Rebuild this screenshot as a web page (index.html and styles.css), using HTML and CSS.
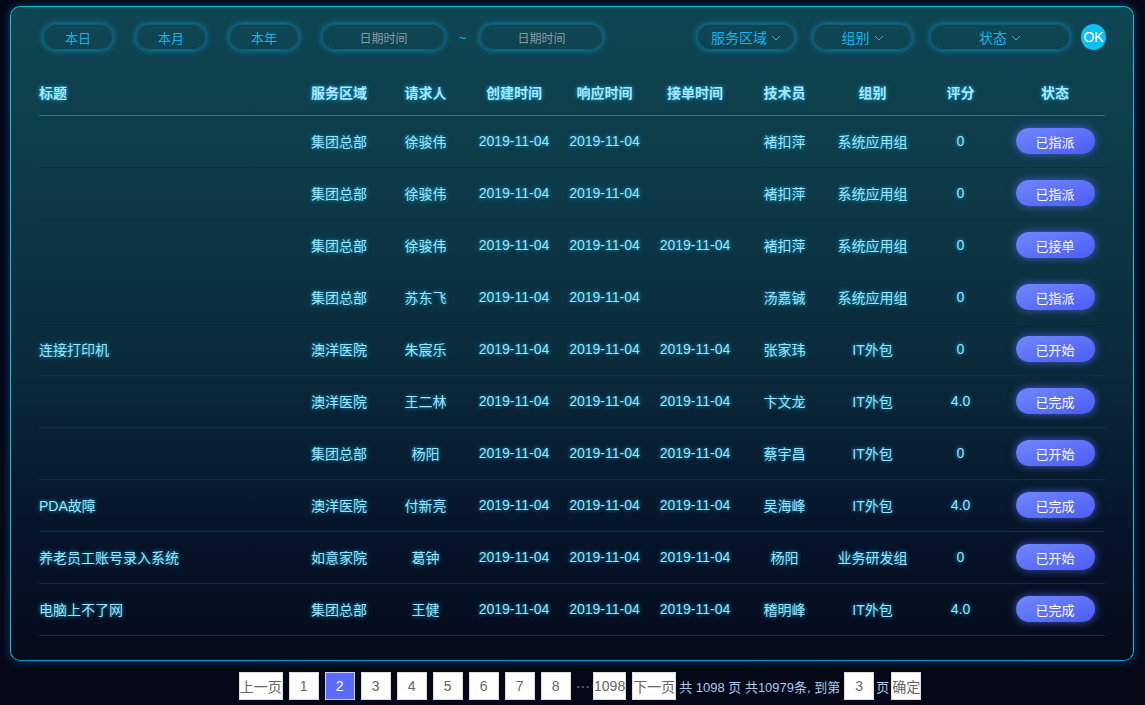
FILE: index.html
```html
<!DOCTYPE html>
<html lang="zh-CN">
<head>
<meta charset="utf-8">
<title>工单列表</title>
<link rel="stylesheet" href="styles.css">
</head>
<body>
<div class="panel">
  <div class="filters">
    <div class="group-left">
      <span class="pill quick">本日</span>
      <span class="pill quick">本月</span>
      <span class="pill quick">本年</span>
      <span class="pill date">日期时间</span>
      <span class="tilde">~</span>
      <span class="pill date">日期时间</span>
    </div>
    <div class="group-right">
      <span class="pill drop drop-area">服务区域<svg class="chev" viewBox="0 0 10 6" width="10" height="6"><polyline points="1,1 5,5 9,1" fill="none" stroke="#10b8f0" stroke-width="1"/></svg></span>
      <span class="pill drop drop-group">组别<svg class="chev" viewBox="0 0 10 6" width="10" height="6"><polyline points="1,1 5,5 9,1" fill="none" stroke="#10b8f0" stroke-width="1"/></svg></span>
      <span class="pill drop drop-status">状态<svg class="chev" viewBox="0 0 10 6" width="10" height="6"><polyline points="1,1 5,5 9,1" fill="none" stroke="#10b8f0" stroke-width="1"/></svg></span>
      <span class="ok">OK</span>
    </div>
  </div>

  <div class="table">
    <div class="row head">
      <div class="c title">标题</div><div class="c">服务区域</div><div class="c">请求人</div><div class="c">创建时间</div><div class="c">响应时间</div><div class="c">接单时间</div><div class="c">技术员</div><div class="c">组别</div><div class="c">评分</div><div class="c">状态</div>
    </div>
    <div class="row">
      <div class="c title"></div><div class="c">集团总部</div><div class="c">徐骏伟</div><div class="c">2019-11-04</div><div class="c">2019-11-04</div><div class="c"></div><div class="c">褚扣萍</div><div class="c">系统应用组</div><div class="c">0</div><div class="c"><span class="status">已指派</span></div>
    </div>
    <div class="row">
      <div class="c title"></div><div class="c">集团总部</div><div class="c">徐骏伟</div><div class="c">2019-11-04</div><div class="c">2019-11-04</div><div class="c"></div><div class="c">褚扣萍</div><div class="c">系统应用组</div><div class="c">0</div><div class="c"><span class="status">已指派</span></div>
    </div>
    <div class="row">
      <div class="c title"></div><div class="c">集团总部</div><div class="c">徐骏伟</div><div class="c">2019-11-04</div><div class="c">2019-11-04</div><div class="c">2019-11-04</div><div class="c">褚扣萍</div><div class="c">系统应用组</div><div class="c">0</div><div class="c"><span class="status">已接单</span></div>
    </div>
    <div class="row">
      <div class="c title"></div><div class="c">集团总部</div><div class="c">苏东飞</div><div class="c">2019-11-04</div><div class="c">2019-11-04</div><div class="c"></div><div class="c">汤嘉铖</div><div class="c">系统应用组</div><div class="c">0</div><div class="c"><span class="status">已指派</span></div>
    </div>
    <div class="row">
      <div class="c title">连接打印机</div><div class="c">澳洋医院</div><div class="c">朱宸乐</div><div class="c">2019-11-04</div><div class="c">2019-11-04</div><div class="c">2019-11-04</div><div class="c">张家玮</div><div class="c">IT外包</div><div class="c">0</div><div class="c"><span class="status">已开始</span></div>
    </div>
    <div class="row">
      <div class="c title"></div><div class="c">澳洋医院</div><div class="c">王二林</div><div class="c">2019-11-04</div><div class="c">2019-11-04</div><div class="c">2019-11-04</div><div class="c">卞文龙</div><div class="c">IT外包</div><div class="c">4.0</div><div class="c"><span class="status">已完成</span></div>
    </div>
    <div class="row">
      <div class="c title"></div><div class="c">集团总部</div><div class="c">杨阳</div><div class="c">2019-11-04</div><div class="c">2019-11-04</div><div class="c">2019-11-04</div><div class="c">蔡宇昌</div><div class="c">IT外包</div><div class="c">0</div><div class="c"><span class="status">已开始</span></div>
    </div>
    <div class="row">
      <div class="c title">PDA故障</div><div class="c">澳洋医院</div><div class="c">付新亮</div><div class="c">2019-11-04</div><div class="c">2019-11-04</div><div class="c">2019-11-04</div><div class="c">吴海峰</div><div class="c">IT外包</div><div class="c">4.0</div><div class="c"><span class="status">已完成</span></div>
    </div>
    <div class="row">
      <div class="c title">养老员工账号录入系统</div><div class="c">如意家院</div><div class="c">葛钟</div><div class="c">2019-11-04</div><div class="c">2019-11-04</div><div class="c">2019-11-04</div><div class="c">杨阳</div><div class="c">业务研发组</div><div class="c">0</div><div class="c"><span class="status">已开始</span></div>
    </div>
    <div class="row">
      <div class="c title">电脑上不了网</div><div class="c">集团总部</div><div class="c">王健</div><div class="c">2019-11-04</div><div class="c">2019-11-04</div><div class="c">2019-11-04</div><div class="c">稽明峰</div><div class="c">IT外包</div><div class="c">4.0</div><div class="c"><span class="status">已完成</span></div>
    </div>
  </div>
</div>

<div class="pager">
  <span class="pg wide">上一页</span>
  <span class="pg">1</span>
  <span class="pg active">2</span>
  <span class="pg">3</span>
  <span class="pg">4</span>
  <span class="pg">5</span>
  <span class="pg">6</span>
  <span class="pg">7</span>
  <span class="pg">8</span>
  <span class="dots">•••</span>
  <span class="pg last">1098</span>
  <span class="pg wide">下一页</span>
  <span class="info">共 1098 页 共10979条, 到第</span>
  <span class="pg input">3</span>
  <span class="info">页</span>
  <span class="pg">确定</span>
</div>
</body>
</html>
```

FILE: styles.css
```css
* { box-sizing: border-box; }

html, body {
  margin: 0;
  padding: 0;
  background: #040817;
  font-family: "Liberation Sans", Arial, "Noto Sans CJK SC", sans-serif;
  font-size: 14px;
}

body {
  width: 1145px;
  height: 705px;
  overflow: hidden;
  padding: 6px 11px 0 10px;
}

.panel {
  height: 655px;
  border: 1px solid #12bcd4;
  border-bottom-color: #1a8fc8;
  border-radius: 10px;
  background: linear-gradient(to bottom, #0f4653 0%, #0d3b49 25%, #0a2a3a 55%, #06142a 80%, #050b1b 100%);
  box-shadow: 0 0 10px rgba(20, 130, 220, 0.45);
  padding: 17px 27px 0 28px;
}

.filters {
  display: flex;
  justify-content: space-between;
  align-items: center;
  height: 26px;
}

.group-left, .group-right {
  display: flex;
  align-items: center;
}

.group-left { margin-left: 4px; }

.pill {
  display: inline-flex;
  align-items: center;
  justify-content: center;
  height: 26px;
  border-radius: 13px;
  border: 1px solid #0d5f78;
  box-shadow: 0 0 6px rgba(10, 170, 230, 0.75);
  color: #12b6ee;
}

.quick {
  width: 70px;
  font-size: 13px;
  margin-right: 23px;
}

.date {
  width: 123px;
  font-size: 12px;
  color: #8a9ba3;
}

.tilde {
  width: 35px;
  text-align: center;
  color: #12b0e6;
  font-size: 13px;
}

.drop {
  font-size: 14px;
  margin-right: 18px;
}

.drop-area { width: 98px; }
.drop-group { width: 99px; }
.drop-status { width: 140px; margin-right: 11px; }

.chev {
  margin-left: 4px;
  margin-top: 1px;
}

.ok {
  width: 25px;
  height: 26px;
  border-radius: 50%;
  background: #0bc0f4;
  color: #ffffff;
  font-size: 14px;
  display: flex;
  align-items: center;
  justify-content: center;
}

.table {
  margin-top: 21px;
  margin-right: 1px;
}

.row {
  display: grid;
  grid-template-columns: 257px 86px 87px 90px 91px 90px 89px 87px 89px 1fr;
  height: 52px;
  border-bottom: 1px solid #0f2f44;
  align-items: center;
  color: #9fe2fb;
  text-shadow: 0 0 4px rgba(20, 200, 255, 0.85);
  padding-bottom: 1px;
}

.row.head {
  height: 45px;
  border-bottom-color: #2a7488;
  font-weight: bold;
  color: #a9e6ff;
  padding-bottom: 2px;
}

.c {
  text-align: center;
  white-space: nowrap;
}

.c.title { text-align: left; }

.status {
  display: inline-flex;
  align-items: center;
  justify-content: center;
  width: 79px;
  height: 26px;
  border-radius: 13px;
  background: linear-gradient(to bottom right, #7088ff, #4b5cf2);
  box-shadow: 0 0 8px rgba(90, 110, 255, 0.7);
  color: #ffffff;
  font-size: 13px;
  text-shadow: none;
}

.pager {
  display: flex;
  justify-content: center;
  align-items: center;
  margin-top: 11px;
  padding-left: 22px;
  height: 28px;
}

.pg {
  display: inline-flex;
  align-items: center;
  justify-content: center;
  min-width: 30px;
  height: 28px;
  background: #ffffff;
  border: 1px solid #dcdcdc;
  color: #666666;
  font-size: 14px;
  margin-right: 6px;
}

.pg.wide { width: 44px; padding: 0; }
.pg.last { width: 33px; padding: 0; }
.pg.active {
  background: #5a6cff;
  color: #ffffff;
  border-color: #c8ccff;
}
.pg.input { margin: 0 5px 0 2px; }

.dots {
  color: #5a6470;
  font-size: 8px;
  letter-spacing: 2px;
  margin: 0 2px 0 0;
}

.info {
  color: #a6ccf2;
  font-size: 13px;
  margin-right: 2px;
  margin-left: -3px;
}
```
